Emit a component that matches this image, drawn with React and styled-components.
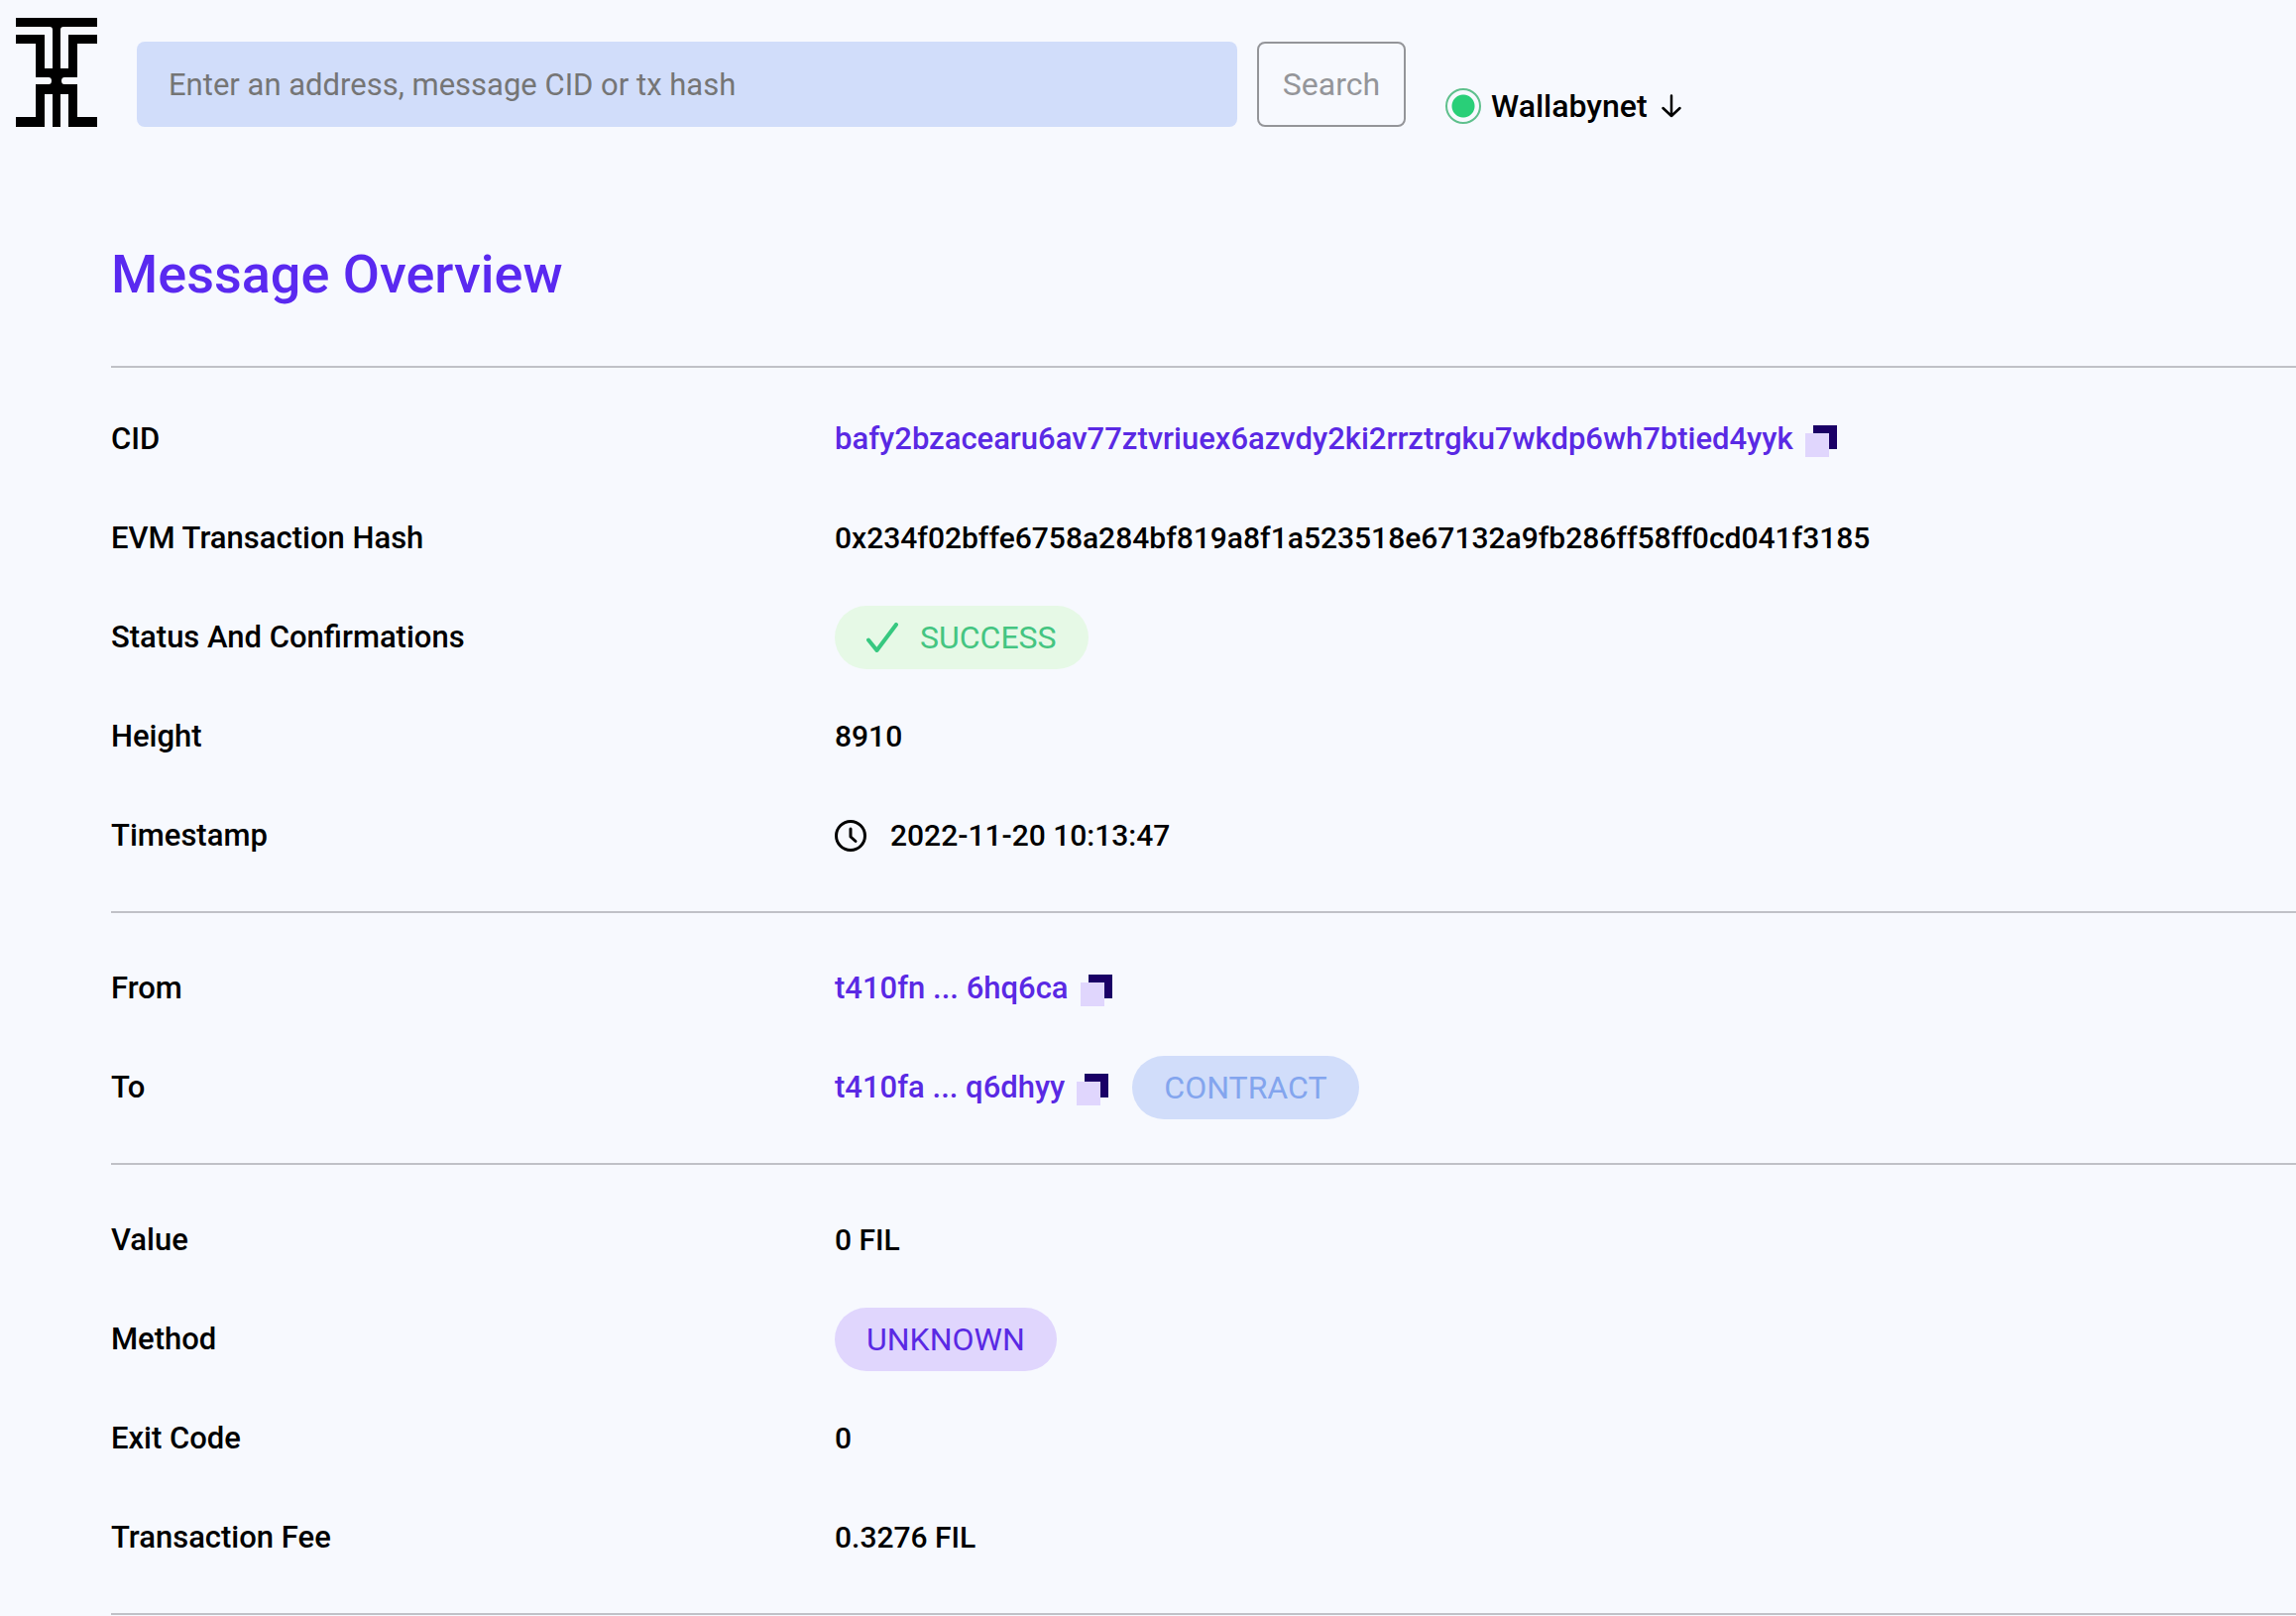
import React from "react";
import styled, { createGlobalStyle } from "styled-components";

const sections = [
  {
    id: "overview",
    rows: [
      {
        label: "CID",
        link: "bafy2bzacearu6av77ztvriuex6azvdy2ki2rrztrgku7wkdp6wh7btied4yyk",
      },
      {
        label: "EVM Transaction Hash",
        text: "0x234f02bffe6758a284bf819a8f1a523518e67132a9fb286ff58ff0cd041f3185",
      },
      {
        label: "Status And Confirmations",
        badge: { tone: "success", text: "SUCCESS", check: true },
      },
      { label: "Height", text: "8910" },
      { label: "Timestamp", text: "2022-11-20 10:13:47", clock: true },
    ],
  },
  {
    id: "parties",
    rows: [
      { label: "From", link: "t410fn ... 6hq6ca" },
      {
        label: "To",
        link: "t410fa ... q6dhyy",
        badge: { tone: "contract", text: "CONTRACT" },
      },
    ],
  },
  {
    id: "execution",
    rows: [
      { label: "Value", text: "0 FIL" },
      { label: "Method", badge: { tone: "unknown", text: "UNKNOWN" } },
      { label: "Exit Code", text: "0" },
      { label: "Transaction Fee", text: "0.3276 FIL" },
    ],
  },
];

const tones = {
  success: { background: "#e6f9e6", color: "#44c581" },
  contract: { background: "#d1ddfa", color: "#83a5ee" },
  unknown: { background: "#e0d6fd", color: "#5a29e4" },
};

const Logo = () => (
  <svg width="82" height="110" viewBox="0 0 82 110" aria-hidden="true">
    <path d="M0 0H82V9H48Q45 9 45 12V51H53V17H82V26H62V60H49Q46 60 46 63.500Q46 67 49 67H62V100H82V110H53V77H45V110H37V77H29V110H0V100H20V67H33Q36 67 36 63.500Q36 60 33 60H20V26H0V17H29V51H37V12Q37 9 34 9H0Z" />
  </svg>
);

const ArrowDown = () => (
  <svg
    width="20"
    height="24"
    viewBox="0 0 20 24"
    fill="none"
    stroke="currentColor"
    strokeWidth="2.500"
    strokeLinecap="round"
    strokeLinejoin="round"
    aria-hidden="true"
  >
    <path d="M10 1.500V22M1.500 14L10 22L18.500 14" />
  </svg>
);

const CopyIcon = () => (
  <svg width="32" height="32" viewBox="0 0 32 32" aria-hidden="true">
    <path d="M8 0H32V24H8Z" fill="#1a0066" />
    <path d="M0 8H24V32H0Z" fill="#e0d6fd" />
  </svg>
);

const CheckIcon = () => (
  <svg width="32" height="30" viewBox="0 0 32 30" fill="none" aria-hidden="true">
    <path
      d="M2 17.500L10.500 28L30 2"
      stroke="#37c880"
      strokeWidth="4"
      strokeLinecap="round"
      strokeLinejoin="round"
    />
  </svg>
);

const ClockIcon = () => (
  <svg
    width="32"
    height="32"
    viewBox="0 0 32 32"
    fill="none"
    stroke="currentColor"
    strokeWidth="3"
    strokeLinecap="round"
    strokeLinejoin="round"
    aria-hidden="true"
  >
    <circle cx="16" cy="16" r="14.500" />
    <path d="M16 9V17L21 21.500" />
  </svg>
);

const App = () => {
  return (
    <>
      <GlobalStyle />
      <Header>
        <Logo />
        <SearchForm onSubmit={(e) => e.preventDefault()}>
          <SearchInput
            type="text"
            aria-label="Search"
            placeholder="Enter an address, message CID or tx hash"
          />
          <SearchButton type="submit">Search</SearchButton>
        </SearchForm>
        <NetworkButton type="button">
          <NetworkStatus />
          Wallabynet
          <Arrow>
            <ArrowDown />
          </Arrow>
        </NetworkButton>
      </Header>

      <Main>
        <Title>Message Overview</Title>
        {sections.map((section) => (
          <Section key={section.id}>
            {section.rows.map((row) => (
              <Row key={row.label}>
                <Label>{row.label}</Label>
                <Value>
                  {row.clock && (
                    <Clock>
                      <ClockIcon />
                    </Clock>
                  )}
                  {row.text}
                  {row.link && (
                    <>
                      <Link href="#">{row.link}</Link>
                      <CopyButton type="button" aria-label={`Copy ${row.label}`}>
                        <CopyIcon />
                      </CopyButton>
                    </>
                  )}
                  {row.badge && (
                    <Badge $tone={row.badge.tone}>
                      {row.badge.check && <CheckIcon />}
                      {row.badge.text}
                    </Badge>
                  )}
                </Value>
              </Row>
            ))}
          </Section>
        ))}
      </Main>
    </>
  );
};

export default App;

const GlobalStyle = createGlobalStyle`
  * {
    box-sizing: border-box;
  }

  body {
    margin: 0;
    background: #f7f9fe;
    color: #000;
    font-family: Roboto, "Liberation Sans", sans-serif;
    font-size: 31px;
    font-weight: 500;
    line-height: 42px;
    overflow-x: hidden;
  }

  svg {
    display: block;
    flex-shrink: 0;
  }

  button,
  input {
    font: inherit;
  }
`;

const Header = styled.header`
  display: flex;
  align-items: flex-end;
  gap: 40px;
  padding: 18px 16px 0;
`;

const SearchForm = styled.form`
  display: flex;
  gap: 20px;
  width: 1280px;
`;

const SearchInput = styled.input`
  flex: 1;
  min-width: 0;
  height: 86px;
  padding: 0 32px;
  border: none;
  border-radius: 8px;
  background: #d1ddfa;
  font-weight: 400;

  &::placeholder {
    color: #757575;
    opacity: 1;
  }
`;

const SearchButton = styled.button`
  width: 150px;
  height: 86px;
  padding: 0;
  border: 2px solid #949599;
  border-radius: 8px;
  background: transparent;
  color: #949599;
  font-size: 32px;
  font-weight: 400;
`;

const NetworkButton = styled.button`
  display: flex;
  align-items: center;
  gap: 10px;
  padding: 0;
  border: none;
  background: none;
  color: #000;
  font-size: 32px;
`;

const NetworkStatus = styled.span`
  width: 36px;
  height: 36px;
  border: 2px solid #5fc08d;
  border-radius: 50%;
  background: radial-gradient(circle, #29cf78 11px, transparent 12px);
`;

const Arrow = styled.span`
  margin-left: 4px;
`;

const Main = styled.main`
  padding: 111px 0 0 112px;
`;

const Title = styled.h1`
  margin: 0;
  padding-bottom: 54px;
  color: #5a29f0;
  font-size: 54px;
  font-weight: 500;
  line-height: 76px;
`;

const Section = styled.dl`
  margin: 0;
  padding: 26px 0;
  border-top: 2px solid #c0c1c7;

  &:first-of-type {
    padding-top: 22px;
  }

  &:last-of-type {
    border-bottom: 2px solid #c0c1c7;
  }
`;

const Row = styled.div`
  display: grid;
  grid-template-columns: 730px 1fr;
  align-items: center;
  height: 100px;
`;

const Label = styled.dt``;

const Value = styled.dd`
  display: flex;
  align-items: center;
  margin: 0;
  font-size: 30px;
  white-space: nowrap;
`;

const Clock = styled.span`
  margin-right: 24px;
`;

const Link = styled.a`
  color: #5a29e4;
  font-size: 31px;
  text-decoration: none;
`;

const CopyButton = styled.button`
  margin: 4px 24px 0 12px;
  padding: 0;
  border: none;
  background: none;
`;

const Badge = styled.span`
  display: flex;
  align-items: center;
  gap: 22px;
  height: 64px;
  padding: 0 32px;
  border-radius: 32px;
  background: ${({ $tone }) => tones[$tone].background};
  color: ${({ $tone }) => tones[$tone].color};
  font-size: 32px;
  font-weight: 400;
`;
